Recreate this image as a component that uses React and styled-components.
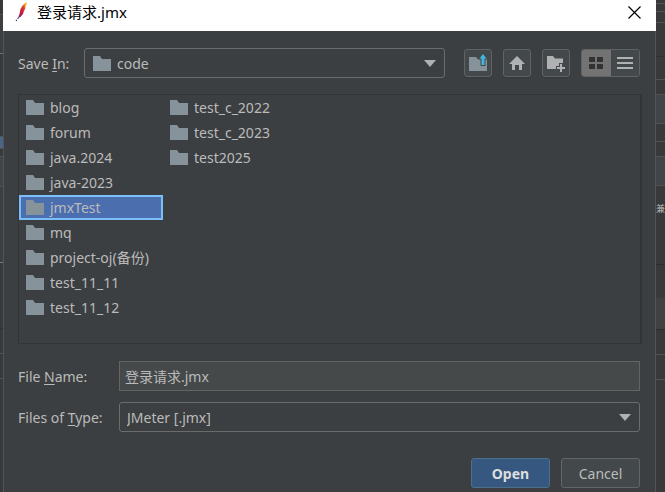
import React, { useState } from "react";
import styled, { createGlobalStyle } from "styled-components";

const Global = createGlobalStyle`
  * { box-sizing: border-box; }
  body { margin: 0; background: #37393b; }
  body, button, input, select { font-family: "Noto Sans", "Noto Sans CJK SC", sans-serif; font-size: 14px; color: #bbbbbb; }
`;

const Page = styled.div`
  display: grid;
  grid-template-columns: 3px minmax(0, 1fr) 9px;
  min-height: 100vh;
  overflow: hidden;
`;

const Backdrop = styled.div`
  display: flex;
  flex-direction: column;
  overflow: hidden;
  background: #37393b;
`;

const Band = styled.div`
  flex: 0 0 ${(p) => p.$size}px;
  border-bottom: 1px solid ${(p) => p.$line || "#505254"};
  background: ${(p) => p.$fill || "transparent"};
  font-size: 9px;
  line-height: 16px;
  padding-top: ${(p) => p.$top || 0}px;
  overflow: hidden;
`;

const Dialog = styled.main`
  background: #3c3f41;
  border: solid #525456;
  border-width: 0 1px;
  display: flex;
  flex-direction: column;
`;

const TitleBar = styled.header`
  height: 31px;
  margin: 0 -1px;
  background: #ffffff;
  color: #000000;
  display: flex;
  align-items: center;
  padding: 0 15px 7px 12px;
  gap: 8px;
`;

const Title = styled.h1`
  flex: 1;
  margin: 0;
  font-size: 15px;
  line-height: 24px;
  font-weight: 400;
`;

const CloseButton = styled.button`
  border: 0;
  padding: 0;
  background: none;
  display: flex;
`;

const Body = styled.form`
  padding: 17px 14px 4px 14px;
  display: flex;
  flex-direction: column;
`;

const TopRow = styled.div`
  display: flex;
  align-items: center;
  height: 30px;
`;

const Label = styled.label`
  flex: 0 0 ${(p) => p.$width}px;
  white-space: nowrap;
  u { text-underline-offset: 2px; }
`;

const SelectBox = styled.div`
  flex: 1;
  min-width: 0;
  height: 30px;
  display: grid;
  align-items: center;
  border: 1px solid #6b6b6b;
  border-radius: 3px;
  > * { grid-area: 1 / 1; }
  > svg { pointer-events: none; }
  > svg:first-child { margin-left: 8px; }
  > svg:last-child { justify-self: end; margin-right: 8px; }
`;

const Select = styled.select`
  appearance: none;
  width: 100%;
  height: 28px;
  border: 0;
  padding: 0 28px 0 ${(p) => p.$inset}px;
  background: transparent;
  outline: none;
`;

const Tools = styled.div`
  display: flex;
  gap: 11px;
  margin-left: 19px;
  margin-right: 1px;
`;

const ToolButton = styled.button`
  width: 28px;
  height: 28px;
  padding: 0;
  display: flex;
  align-items: center;
  justify-content: center;
  background: #43494a;
  border: 1px solid #616465;
  border-radius: 3px;
  box-shadow: 0 1px 0 #363839;
`;

const ViewSwitch = styled.div`
  display: flex;
  width: 59px;
  height: 28px;
  border: 1px solid #616465;
  border-radius: 3px;
  overflow: hidden;
`;

const ViewButton = styled.button`
  flex: 1;
  padding: 0;
  border: 0;
  display: flex;
  align-items: center;
  justify-content: center;
  background: ${(p) => (p.$on ? "#737373" : "#43494a")};
`;

const FileList = styled.ul`
  list-style: none;
  margin: 16px -1px 0 0;
  padding: 0;
  height: 250px;
  border: 1px solid #323536;
  border-right-width: 2px;
  display: grid;
  grid-auto-flow: column;
  grid-template-rows: repeat(9, 25px);
  grid-template-columns: 144px 144px;
`;

const FileItem = styled.button`
  width: 100%;
  height: 25px;
  padding: 0 0 0 5px;
  display: flex;
  align-items: center;
  gap: 6px;
  text-align: left;
  white-space: nowrap;
  line-height: 20px;
  background: ${(p) => (p.$selected ? "#4b6eaf" : "transparent")};
  border: 2px solid ${(p) => (p.$selected ? "#7bbefa" : "transparent")};
`;

const Field = styled.div`
  display: flex;
  align-items: center;
  margin-top: ${(p) => p.$gap}px;
  margin-right: 1px;
`;

const TextInput = styled.input`
  flex: 1;
  min-width: 0;
  height: 30px;
  padding: 0 5px;
  background: #45494a;
  border: 1px solid #646464;
  outline: none;
`;

const Actions = styled.div`
  display: flex;
  justify-content: flex-end;
  gap: 11px;
  margin: 26px 1px 0 0;
`;

const ActionButton = styled.button`
  width: 79px;
  height: 30px;
  padding: 0;
  border-radius: 3px;
  border: 1px solid ${(p) => (p.$primary ? "#4c708c" : "#646666")};
  background: ${(p) => (p.$primary ? "#365880" : "#43494a")};
  font-weight: ${(p) => (p.$primary ? 700 : 400)};
  && { color: ${(p) => (p.$primary ? "#dddddd" : "#bbbbbb")}; }
`;

const Folder = () => (
  <svg width="18" height="15" viewBox="0 0 18 15" aria-hidden="true">
    <path d="M0 0H7L9 3H18V15H0Z" fill="#87939a" />
  </svg>
);

const Arrow = () => (
  <svg width="12" height="7" viewBox="0 0 12 7" aria-hidden="true">
    <path d="M0 0H12L6 7Z" fill="#afb1b3" />
  </svg>
);

const Feather = () => (
  <svg width="14" height="20" viewBox="0 0 14 20" aria-hidden="true">
    <defs>
      <linearGradient id="plume" x1="0" y1="1" x2="1" y2="0">
        <stop offset="0" stopColor="#6d2275" />
        <stop offset=".4" stopColor="#c51f3f" />
        <stop offset=".65" stopColor="#d83a31" />
        <stop offset=".85" stopColor="#f8a51b" />
      </linearGradient>
    </defs>
    <path d="M11.500 0L8 3L5.500 7L4.500 12L3 16L5.500 15L8 12L9 9L10.500 6L10.500 4L11.500 2Z" fill="url(#plume)" />
    <path d="M1 19L3.500 15.500" stroke="#322d66" strokeWidth="1.1" strokeDasharray="1.500 1.200" />
  </svg>
);

const files = [
  "blog", "forum", "java.2024", "java-2023", "jmxTest", "mq",
  "project-oj(备份)", "test_11_11", "test_11_12",
  "test_c_2022", "test_c_2023", "test2025",
];

const leftBands = [
  { size: 15 }, { size: 39, fill: "#3c3f41", line: "#6c6e70" },
  { size: 83 }, { size: 12, fill: "#4a6687" }, { size: 8 },
  { size: 30, fill: "#414547" }, { size: 76, fill: "#3c3f41", line: "#77797b" },
  { size: 66, line: "#2f3133" }, { size: 25 }, { size: 25 },
];

const rightBands = [
  { size: 4 }, { size: 8 }, { size: 11 }, { size: 34, line: "#2f3133" },
  { size: 23 }, { size: 15 }, { size: 29, fill: "#414547" }, { size: 18 },
  { size: 15 }, { size: 29, fill: "#414547" },
  { size: 79, line: "#2b2d2f", text: "兼", top: 15 },
  { size: 33, line: "#37393b" }, { size: 32, fill: "#3f4142", line: "#2b2d2f" },
  { size: 25 }, { size: 25 },
];

const Strip = ({ bands }) => (
  <Backdrop aria-hidden="true">
    {bands.map((b, i) => (
      <Band key={i} $size={b.size} $line={b.line} $fill={b.fill} $top={b.top}>{b.text}</Band>
    ))}
  </Backdrop>
);

export default function App() {
  const [selected, setSelected] = useState("jmxTest");
  const [view, setView] = useState("grid");
  return (
    <Page>
      <Global />
      <Strip bands={leftBands} />
      <Dialog>
        <TitleBar>
          <Feather />
          <Title>登录请求.jmx</Title>
          <CloseButton aria-label="Close">
            <svg width="13" height="13" viewBox="0 0 13 13">
              <path d="M.5 .5L12.500 12.500M12.500 .5L.5 12.500" stroke="#000" strokeWidth="1.2" />
            </svg>
          </CloseButton>
        </TitleBar>
        <Body onSubmit={(e) => e.preventDefault()}>
          <TopRow>
            <Label htmlFor="dir" $width={66}>Save <u>I</u>n:</Label>
            <SelectBox>
              <Folder />
              <Select id="dir" $inset={32}><option>code</option></Select>
              <Arrow />
            </SelectBox>
            <Tools>
              <ToolButton type="button" aria-label="Up one level">
                <svg width="20" height="18" viewBox="0 0 20 18">
                  <path d="M1 3H8L10 5.500H19V17H1Z" fill="#87939a" />
                  <path d="M15 0L19.500 5H17.500V12H12.500V5H10.500Z" fill="#43494a" />
                  <path d="M15 0L18.500 4.500H16.500V11H13.500V4.500H11.500Z" fill="#40b6e0" />
                </svg>
              </ToolButton>
              <ToolButton type="button" aria-label="Home">
                <svg width="16" height="14" viewBox="0 0 16 14">
                  <path d="M8 0L16 8H13V14H10V9H6V14H3V8H0Z" fill="#afb1b3" />
                </svg>
              </ToolButton>
              <ToolButton type="button" aria-label="New folder">
                <svg width="18" height="17" viewBox="0 0 18 17">
                  <path d="M0 1H6L8 3.500H16V8H12V11H9V14H0Z" fill="#afb1b3" />
                  <path d="M13 9H15V12H18V14H15V17H13V14H10V12H13Z" fill="#afb1b3" />
                </svg>
              </ToolButton>
              <ViewSwitch>
                <ViewButton type="button" aria-label="List view" $on={view === "grid"} onClick={() => setView("grid")}>
                  <svg width="14" height="14" viewBox="0 0 14 14" fill="#323232">
                    <path d="M0 1H6V6H0ZM8 1H14V6H8ZM0 8H6V13H0ZM8 8H14V13H8Z" />
                  </svg>
                </ViewButton>
                <ViewButton type="button" aria-label="Details view" $on={view === "rows"} onClick={() => setView("rows")}>
                  <svg width="16" height="14" viewBox="0 0 16 14" fill="#afb1b3">
                    <path d="M0 1H16V3H0ZM0 6H16V8H0ZM0 11H16V13H0Z" />
                  </svg>
                </ViewButton>
              </ViewSwitch>
            </Tools>
          </TopRow>
          <FileList>
            {files.map((name) => (
              <li key={name}>
                <FileItem type="button" $selected={selected === name} onClick={() => setSelected(name)}>
                  <Folder />{name}
                </FileItem>
              </li>
            ))}
          </FileList>
          <Field $gap={17}>
            <Label htmlFor="name" $width={101}>File <u>N</u>ame:</Label>
            <TextInput id="name" defaultValue="登录请求.jmx" />
          </Field>
          <Field $gap={11}>
            <Label htmlFor="type" $width={101}>Files of <u>T</u>ype:</Label>
            <SelectBox>
              <Select id="type" $inset={7}><option>JMeter [.jmx]</option></Select>
              <Arrow />
            </SelectBox>
          </Field>
          <Actions>
            <ActionButton $primary type="submit">Open</ActionButton>
            <ActionButton type="button">Cancel</ActionButton>
          </Actions>
        </Body>
      </Dialog>
      <Strip bands={rightBands} />
    </Page>
  );
}
